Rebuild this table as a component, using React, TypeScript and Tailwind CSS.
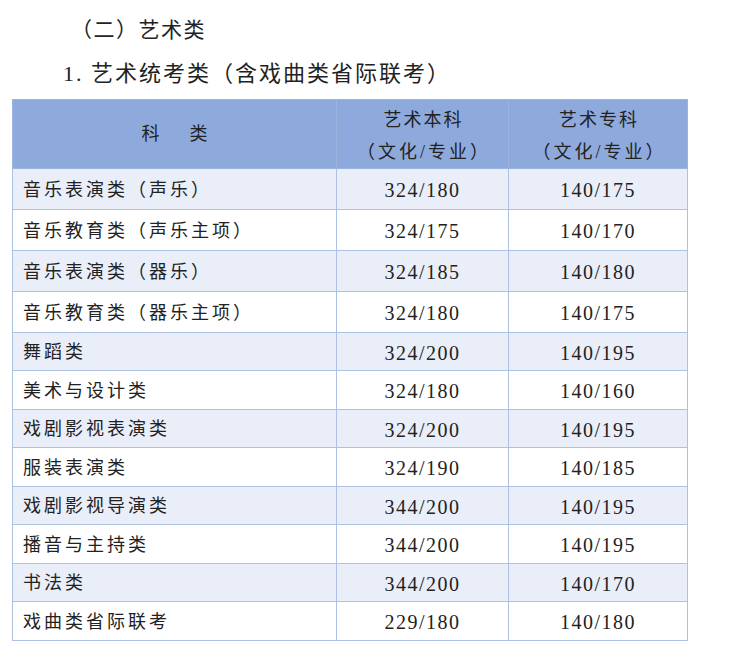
const ROWS: [string, string, string][] = [
  ['音乐表演类（声乐）', '324/180', '140/175'],
  ['音乐教育类（声乐主项）', '324/175', '140/170'],
  ['音乐表演类（器乐）', '324/185', '140/180'],
  ['音乐教育类（器乐主项）', '324/180', '140/175'],
  ['舞蹈类', '324/200', '140/195'],
  ['美术与设计类', '324/180', '140/160'],
  ['戏剧影视表演类', '324/200', '140/195'],
  ['服装表演类', '324/190', '140/185'],
  ['戏剧影视导演类', '344/200', '140/195'],
  ['播音与主持类', '344/200', '140/195'],
  ['书法类', '344/200', '140/170'],
  ['戏曲类省际联考', '229/180', '140/180'],
];

const serif = "font-['Liberation_Serif','Noto_Sans_CJK_SC',serif]";

// first rows in the scan run a little taller than the later ones
const rowH = (i: number) => (i < 4 ? 'h-[41px]' : i % 2 === 0 ? 'h-[38px]' : 'h-[39px]');

export default function App() {
  return (
    <div className={`w-[740px] h-[645px] bg-white text-[#222] overflow-hidden ${serif}`}>
      <div className="pl-[71px] pt-[14px] text-[21px] leading-[32px] tracking-[1.5px]">（二）艺术类</div>
      <div className="pl-[63px] pt-[12px] text-[22px] leading-[32px] tracking-[2px]">1. 艺术统考类（含戏曲类省际联考）</div>

      <table className="ml-[12px] mt-[9px] w-[675px] border-collapse table-fixed">
        <colgroup>
          <col className="w-[324px]" />
          <col className="w-[172px]" />
          <col className="w-[179px]" />
        </colgroup>
        <thead>
          <tr className="h-[68px] bg-[#8eaadd] text-[18px]">
            <th className="border border-[#9db4e0] font-normal tracking-[30px] pl-[30px]">科类</th>
            <th className="border border-[#9db4e0] font-normal leading-[32px] pt-[4px]">
              <div className="tracking-[2px] pl-[2px]">艺术本科</div>
              <div className="tracking-[3px] pl-[3px]">（文化/专业）</div>
            </th>
            <th className="border border-[#9db4e0] font-normal leading-[32px] pt-[4px]">
              <div className="tracking-[2px] pl-[2px]">艺术专科</div>
              <div className="tracking-[3px] pl-[3px]">（文化/专业）</div>
            </th>
          </tr>
        </thead>
        <tbody>
          {ROWS.map(([name, a, b], i) => (
            <tr key={name} className={`${rowH(i)} ${i % 2 === 0 ? 'bg-[#e9eef9]' : 'bg-white'}`}>
              <td className="border border-[#adc1e4] pl-[10px] pt-[2px] text-[18px] tracking-[3px]">{name}</td>
              <td className="border border-[#adc1e4] pt-[2px] text-center text-[20px] tracking-[1.5px]">{a}</td>
              <td className="border border-[#adc1e4] pt-[2px] text-center text-[20px] tracking-[1.5px]">{b}</td>
            </tr>
          ))}
        </tbody>
      </table>
    </div>
  );
}
